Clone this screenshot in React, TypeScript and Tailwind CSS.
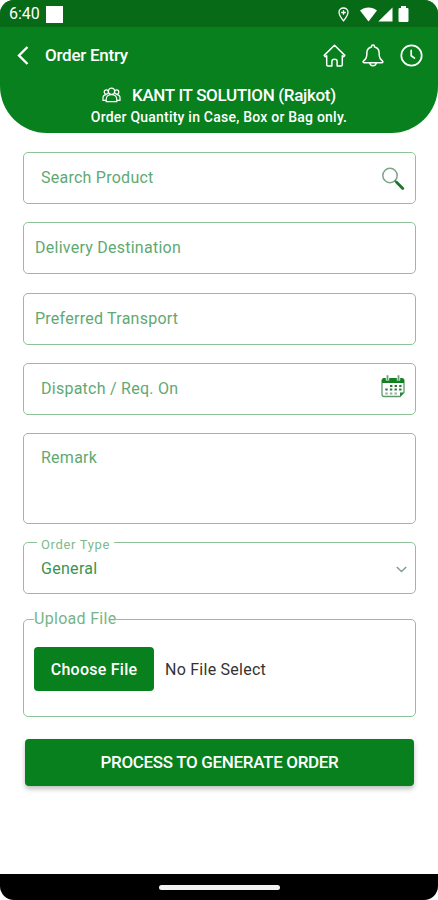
import type { ReactNode } from 'react';

interface FieldProps {
  label: string;
  className?: string;
  icon?: ReactNode;
}

function Field({ label, className = '', icon }: FieldProps) {
  return (
    <div
      className={`flex h-[52px] items-center justify-between rounded-[5px] border border-[#8fc29b] pr-[10px] text-[16px] tracking-[0.25px] text-[#5fa973] ${className}`}
    >
      <span>{label}</span>
      {icon}
    </div>
  );
}

function StatusBar() {
  return (
    <div className="flex h-[27px] items-center bg-[#066a17] pl-[9px] pr-[29px] pt-px text-white">
      <span className="text-[16px] leading-none">6:40</span>
      <span className="ml-[6px] h-[17px] w-[17px] bg-white" />
      <div className="ml-auto flex items-center">
        <svg width="11" height="15" viewBox="0 0 11 15" fill="none" stroke="currentColor" strokeWidth="1.3">
          <path d="M5.5 1C3 1 1 2.9 1 5.3 1 8.5 5.5 13.8 5.5 13.8S10 8.5 10 5.3C10 2.9 8 1 5.5 1z" />
          <path d="M5.5 3.2v4.6M3.2 5.5h4.6" />
        </svg>
        <svg className="ml-[11px]" width="17" height="15" viewBox="0 0 17 15" fill="currentColor">
          <path d="M0 3.4C4.8-.5 12.2-.5 17 3.4L8.5 14.4z" />
        </svg>
        <svg className="ml-[1px]" width="15" height="15" viewBox="0 0 15 15" fill="currentColor">
          <path d="M14.5.5v14H.3z" />
        </svg>
        <svg className="ml-[5px]" width="11" height="16" viewBox="0 0 11 16" fill="currentColor">
          <path d="M3 0h5v2h1.3q1.2 0 1.2 1.2v11.6q0 1.2-1.2 1.2H1.7Q.5 16 .5 14.8V3.2Q.5 2 1.7 2H3z" />
        </svg>
      </div>
    </div>
  );
}

function Header() {
  return (
    <header className="h-[133px] overflow-hidden rounded-b-[47px] bg-[#07801d] text-white">
      <StatusBar />
      <div className="flex h-[56px] items-center pl-[17px] pr-[15px]">
        <svg width="12" height="19" viewBox="0 0 12 19" fill="none" stroke="currentColor" strokeWidth="2.4">
          <path d="M10.5 1L2 9.5l8.5 8.5" />
        </svg>
        <h1 className="ml-[16px] pt-[2px] text-[17px] font-medium tracking-[-0.25px]">Order Entry</h1>
        <div className="ml-auto flex items-center gap-[16px]">
          <svg width="23" height="23" viewBox="0 0 23 23" fill="none" stroke="currentColor" strokeWidth="1.5" strokeLinejoin="round" strokeLinecap="round">
            <path d="M1.2 11.4L11.5 1.2l10.3 10.2-1.2 1.4-1.3-1.1v9.1q0 1.2-1.2 1.2h-4v-4.6q0-2.1-2.6-2.1t-2.6 2.1V22h-4q-1.2 0-1.2-1.2v-9.1l-1.3 1.1z" />
          </svg>
          <svg width="22" height="23" viewBox="0 0 22 23" fill="none" stroke="currentColor" strokeWidth="1.5" strokeLinejoin="round" strokeLinecap="round">
            <path d="M9.5 3V2.3q0-1.3 1.5-1.3t1.5 1.3V3c3 .7 4.6 2.8 4.6 5.8 0 5.4 1.3 6.4 3.4 8.2.8.8.4 1.7-.8 1.7H2.3c-1.2 0-1.6-.9-.8-1.7 2.1-1.8 3.4-2.8 3.4-8.2 0-3 1.6-5.1 4.6-5.8z" />
            <path d="M7.8 18.8c.2 4 6.2 4 6.4 0" />
          </svg>
          <svg width="23" height="23" viewBox="0 0 23 23" fill="none" stroke="currentColor" strokeLinecap="round">
            <circle cx="11.5" cy="11.5" r="10.2" strokeWidth="1.7" />
            <path d="M11.2 6.4v5.3l3.3 2.4" strokeWidth="1.7" />
          </svg>
        </div>
      </div>
      <div className="flex items-center pl-[102px] pt-[3px]">
        <svg className="-mt-[2px]" width="19" height="16" viewBox="0 0 19 16" fill="none" stroke="currentColor" strokeWidth="1.2">
          <circle cx="9.5" cy="4.2" r="3.1" />
          <circle cx="4.3" cy="5" r="2.1" />
          <circle cx="14.7" cy="5" r="2.1" />
          <path d="M4.2 14.6v-2.2c0-6.4 10.6-6.4 10.6 0v2.2z" />
          <path d="M4.2 13.4H1v-2.7q0-2.9 3.6-3M14.8 13.4H18v-2.7q0-2.9-3.6-3" />
        </svg>
        <span className="ml-[11px] whitespace-nowrap text-[17px] font-medium leading-[19px] tracking-[-0.33px]">
          KANT IT SOLUTION (Rajkot)
        </span>
      </div>
      <p className="mt-[2px] text-center text-[14px] font-medium leading-[20px] tracking-[0.22px]">
        Order Quantity in Case, Box or Bag only.
      </p>
    </header>
  );
}

const searchIcon = (
  <svg className="mt-[2px]" width="24" height="24" viewBox="0 0 24 24" fill="none">
    <circle cx="9" cy="8.5" r="7.2" stroke="#7da487" strokeWidth="1.5" />
    <path d="M13.8 13.5l2 2" stroke="#3c7d48" strokeWidth="1.8" />
    <path d="M15.8 15.5l6 6" stroke="#1b7829" strokeWidth="2.8" strokeLinecap="round" />
  </svg>
);

const calendarIcon = (
  <svg className="mb-[5px]" width="24" height="23" viewBox="0 0 24 23" fill="none">
    <path d="M1 4.5v15q0 2 2 2h16l4-4v-13" stroke="#5f9a6b" strokeWidth="1.3" />
    <path d="M19 21.5v-4h4z" fill="#28813a" />
    <path d="M1 8V4.7Q1 3 2.7 3h18.6Q23 3 23 4.7V8z" fill="#11801f" />
    <path d="M6.5 0v5.5M17.5 0v5.5" stroke="#fff" strokeWidth="3.4" />
    <path d="M6.5 .3v5M17.5 .3v5" stroke="#6c9c76" strokeWidth="1.8" />
    <path d="M9 11h11.5M4.3 14.5h16.2" stroke="#28773a" strokeWidth="2.2" strokeDasharray="2.4 2.2" />
    <path d="M4.3 18.5h12" stroke="#8fb297" strokeWidth="2.2" strokeDasharray="2.4 2.2" />
  </svg>
);

export default function App() {
  return (
    <div className="flex h-[900px] w-[438px] flex-col bg-white font-[Roboto,sans-serif]">
      <div className="flex flex-1 flex-col overflow-hidden rounded-t-[14px]">
        <Header />
        <main className="flex flex-col pl-[23px] pr-[22px] pt-[19px]">
          <div className="flex flex-col gap-[18.3px]">
            <Field label="Search Product" className="pl-[17px]" icon={searchIcon} />
            <Field label="Delivery Destination" className="pl-[11px]" />
            <Field label="Preferred Transport" className="pl-[11px]" />
            <Field label="Dispatch / Req. On" className="pl-[17px]" icon={calendarIcon} />
            <div className="h-[91px] rounded-[5px] border border-[#8fc29b] pl-[17px] pt-[12px] text-[16px] tracking-[0.25px] text-[#5fa973]">
              Remark
            </div>
          </div>

          {/* order type */}
          <div className="relative mt-[18px] flex h-[52px] items-center justify-between rounded-[5px] border border-[#8fc29b] pl-[17px] pr-[8px] pt-[2px] text-[16px] tracking-[0.3px] text-[#3b9350]">
            <span className="absolute -top-[8px] left-[13px] bg-white px-[4px] text-[13px] leading-[19px] tracking-[0.65px] text-[#7fb98d]">
              Order Type
            </span>
            <span>General</span>
            <svg width="11" height="7" viewBox="0 0 11 7" fill="none" stroke="#7f9f86" strokeWidth="1.5">
              <path d="M.8 1l4.7 4.5L10.2 1" />
            </svg>
          </div>

          {/* file upload */}
          <div className="relative mt-[25px] flex h-[98px] items-center rounded-[5px] border border-[#8fc29b] pl-[10px] pt-[2px] text-[16px]">
            <span className="absolute -top-[12px] left-[10px] bg-white text-[16px] leading-[22px] tracking-[0.3px] text-[#76b487]">
              Upload File
            </span>
            <button className="h-[44px] w-[120px] rounded-[4px] bg-[#07801d] pt-px font-medium tracking-[0.25px] text-white">
              Choose File
            </button>
            <span className="ml-[11px] pt-px tracking-[0.25px] text-[#333]">No File Select</span>
          </div>

          <button className="mx-[2px] mt-[22px] h-[47px] rounded-[4px] bg-[#07801d] pt-px text-[17px] font-medium tracking-[-0.33px] text-white shadow-[0_3px_5px_rgba(0,0,0,0.25)]">
            PROCESS TO GENERATE ORDER
          </button>
        </main>
      </div>
      <div className="flex h-[26px] items-center justify-center rounded-b-[14px] bg-black">
        <div className="h-[5px] w-[121px] rounded-full bg-[#f2f2f2]" />
      </div>
    </div>
  );
}
